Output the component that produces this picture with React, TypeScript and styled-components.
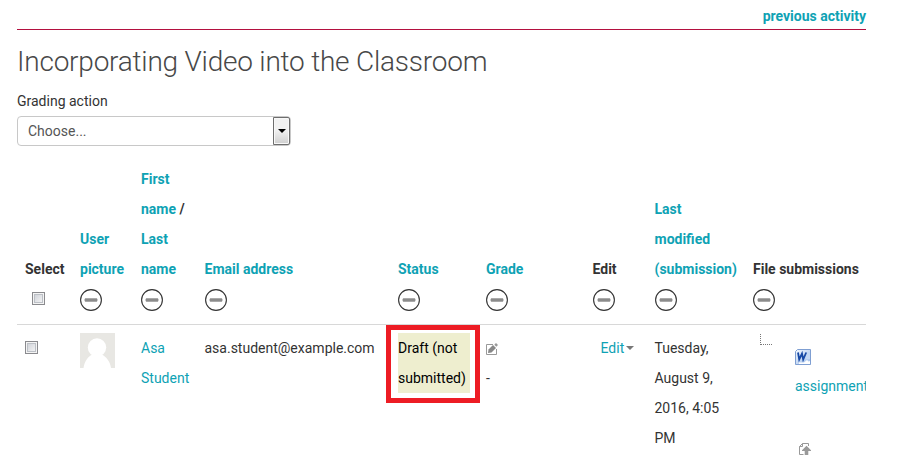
import React from 'react';
import styled, { createGlobalStyle, css } from 'styled-components';

const GlobalStyle = createGlobalStyle`
  * { box-sizing: border-box; }
  body {
    margin: 0;
    background: #fff;
    color: #333;
    font: 400 14px/30px Roboto, "Open Sans", sans-serif;
  }
`;

const Page = styled.main`
  width: 867px;
  height: 472px;
  padding: 0 1px 0 17px;
  overflow: hidden;
`;

const TopBar = styled.nav`
  display: flex;
  justify-content: flex-end;
  height: 30px;
  padding-top: 1px;
  border-bottom: 1px solid #b3103f;
`;

const link = css`
  color: #0ea2b4;
  text-decoration: none;
`;

const Link = styled.a`
  ${link}
`;

const BoldLink = styled.a`
  ${link}
  font-weight: 700;
`;

const Title = styled.h1`
  margin: 12px 0 0;
  font-size: 28px;
  font-weight: 300;
  line-height: 40px;
  letter-spacing: -0.22px;
  color: #484848;
  white-space: nowrap;
`;

const Label = styled.label`
  display: block;
  margin-top: 4px;
`;

const SelectBox = styled.div`
  display: flex;
  justify-content: space-between;
  width: 274px;
  height: 30px;
  border: 1px solid #c8c8c8;
  border-radius: 4px;
  padding-left: 10px;
  line-height: 28px;
  color: #555;
`;

const SelectArrow = styled.span`
  display: flex;
  align-items: center;
  justify-content: center;
  width: 17px;
  height: 28px;
  border: 1px solid #6e6e6e;
  border-radius: 0 2px 2px 0;
  box-shadow: inset 0 0 0 1px #f8f8f8;
  background: linear-gradient(#f2f2f2 45%, #cfcfcf);
`;

const Row = styled.div`
  display: grid;
  grid-template-columns: 55px 61px 63.5px 193.5px 88px 106.5px 62px 98.5px 121px;
`;

const HeadRow = styled(Row)`
  align-items: end;
  margin-top: 18px;
  height: 160px;
  font-weight: 700;
`;

const BodyRow = styled(Row)`
  align-items: start;
  border-top: 1px solid #d8d8d8;
`;

const HeadCell = styled.div`
  display: flex;
  flex-direction: column;
  align-items: flex-start;
  padding: 0 0 12px 8px;
  white-space: nowrap;
`;

const Toggle = styled.div<{ $indent?: number }>`
  display: flex;
  align-items: center;
  height: 24px;
  margin-top: 4px;
  margin-left: ${({ $indent = -1 }) => $indent}px;
`;

const Cell = styled.div<{ $left?: number }>`
  position: relative;
  padding: 8px 0 0 ${({ $left = 8 }) => $left}px;
  white-space: nowrap;
`;

const Check = styled.span`
  display: block;
  width: 13px;
  height: 13px;
  border: 1px solid #8a8a8e;
  box-shadow: inset 0 0 0 1px #f4f4f4, inset 0 0 0 2px #bcc0c6;
  background: linear-gradient(135deg, #c9ccd3, #fafafa);
`;

const HeadCheck = styled(Check)`
  margin-top: -3px;
`;

const RowCheck = styled(Check)`
  margin-top: 8px;
`;

const StatusText = styled.div`
  width: 72px;
  background: #eeeecf;
  color: #000;
`;

const Highlight = styled.div`
  position: absolute;
  top: 0;
  left: -4px;
  width: 94px;
  height: 78px;
  border: 5px solid #ed1c24;
`;

const GradeIcon = styled.div`
  display: flex;
  align-items: center;
  height: 30px;
  padding-top: 2px;
`;

const EditMenu = styled.a`
  ${link}
  display: flex;
  align-items: center;
  gap: 2px;
`;

const FileTree = styled.div`
  position: relative;
  display: flex;
  flex-direction: column;
  padding-left: 34px;
  height: 130px;
`;

const Branch = styled.span`
  position: absolute;
  top: 1px;
  left: -1px;
  width: 12px;
  height: 11px;
  border-left: 1px dotted #777;
  border-bottom: 1px dotted #777;
`;

const FileIcon = styled.div`
  display: flex;
  margin-top: 16px;
  height: 22px;
`;

const FileName = styled(Link)`
  width: 71px;
  overflow: hidden;
`;

const UploadIcon = styled.div`
  display: flex;
  margin: 42px 0 0 4px;
`;

const Minus = () => (
  <svg width="24" height="24" viewBox="0 0 24 24">
    <circle cx="12" cy="12" r="10.4" fill="none" stroke="#333" strokeWidth="1.1" />
    <rect x="5.500" y="10.500" width="13" height="3" rx="1" fill="#999" />
    <path d="M6 11h12M6 13h12" stroke="#777" strokeWidth=".8" />
  </svg>
);

const Caret = ({ color }: { color: string }) => (
  <svg width="8" height="4" viewBox="0 0 8 4">
    <path d="M0 0h8L4 4z" fill={color} />
  </svg>
);

const Avatar = () => (
  <svg width="35" height="35" viewBox="0 0 35 35" display="block">
    <rect width="35" height="35" fill="#e8e7e3" />
    <circle cx="17" cy="14.5" r="9.2" fill="#fff" />
    <path d="M3.500 35C4.500 28 8 23.500 12.500 21.500h9C26 23.500 30 28 31 35z" fill="#fff" />
  </svg>
);

const PencilBox = () => (
  <svg width="12" height="12" viewBox="0 0 12 12">
    <path d="M7 1.500H.5v10h10V6" fill="none" stroke="#999" />
    <path d="M2 10L2.500 6.500 7 2l3 3L5.500 9.500z" fill="#888" />
    <path d="M8.300 1.700L10 0l2 2-1.700 1.700z" fill="#999" />
  </svg>
);

const WordDoc = () => (
  <svg width="16" height="16" viewBox="0 0 16 16">
    <defs>
      <linearGradient id="doc" x1="0" y1="0" x2="1" y2="1">
        <stop offset="0" stopColor="#f4f9ff" />
        <stop offset="1" stopColor="#9dbdea" />
      </linearGradient>
    </defs>
    <path d="M2.500.5h13v15H.5v-13z" fill="url(#doc)" stroke="#7f9fd2" />
    <path d="M11 3h4v7h-4z" fill="#c3d8f4" />
    <path d="M3 3.500l1.200 7L7 4.500l1.200 6L11.200 3.500" fill="none" stroke="#1749a6" strokeWidth="1.800" />
    <path d="M4 15v-1.500h5L12 11l1.500 1.500L15 12v3z" fill="#fff" />
  </svg>
);

const Upload = () => (
  <svg width="12" height="12" viewBox="0 0 12 12">
    <path d="M9.500 3V.5h-6l-3 3v8h4M3.500.5v3h-3" fill="none" stroke="#999" />
    <path d="M7.500 2.800L12 7.300V8H9.300v4H5.700V8H3v-.7z" fill="#999" />
  </svg>
);

export default function App() {
  return (
    <>
      <GlobalStyle />
      <Page>
        <TopBar><BoldLink>previous activity</BoldLink></TopBar>
        <Title>Incorporating Video into the Classroom</Title>
        <Label>Grading action</Label>
        <SelectBox>
          Choose...
          <SelectArrow><Caret color="#000" /></SelectArrow>
        </SelectBox>

        <HeadRow>
          <HeadCell>Select<Toggle $indent={7}><HeadCheck /></Toggle></HeadCell>
          <HeadCell><BoldLink>User<br />picture</BoldLink><Toggle><Minus /></Toggle></HeadCell>
          <HeadCell>
            <div>
              <BoldLink>First<br />name</BoldLink> /<br />
              <BoldLink>Last<br />name</BoldLink>
            </div>
            <Toggle><Minus /></Toggle>
          </HeadCell>
          <HeadCell><BoldLink>Email address</BoldLink><Toggle><Minus /></Toggle></HeadCell>
          <HeadCell><BoldLink>Status</BoldLink><Toggle><Minus /></Toggle></HeadCell>
          <HeadCell><BoldLink>Grade</BoldLink><Toggle><Minus /></Toggle></HeadCell>
          <HeadCell>Edit<Toggle><Minus /></Toggle></HeadCell>
          <HeadCell><BoldLink>Last<br />modified<br />(submission)</BoldLink><Toggle><Minus /></Toggle></HeadCell>
          <HeadCell>File submissions<Toggle><Minus /></Toggle></HeadCell>
        </HeadRow>

        <BodyRow>
          <Cell><RowCheck /></Cell>
          <Cell><Avatar /></Cell>
          <Cell><Link>Asa<br />Student</Link></Cell>
          <Cell>asa.student@example.com</Cell>
          <Cell><StatusText>Draft (not<br />submitted)</StatusText><Highlight /></Cell>
          <Cell><GradeIcon><PencilBox /></GradeIcon>-</Cell>
          <Cell $left={16}><EditMenu>Edit<Caret color="#777" /></EditMenu></Cell>
          <Cell>Tuesday,<br />August 9,<br />2016, 4:05<br />PM</Cell>
          <Cell $left={16}>
            <FileTree>
              <Branch />
              <FileIcon><WordDoc /></FileIcon>
              <FileName>assignment</FileName>
              <UploadIcon><Upload /></UploadIcon>
            </FileTree>
          </Cell>
        </BodyRow>
      </Page>
    </>
  );
}
